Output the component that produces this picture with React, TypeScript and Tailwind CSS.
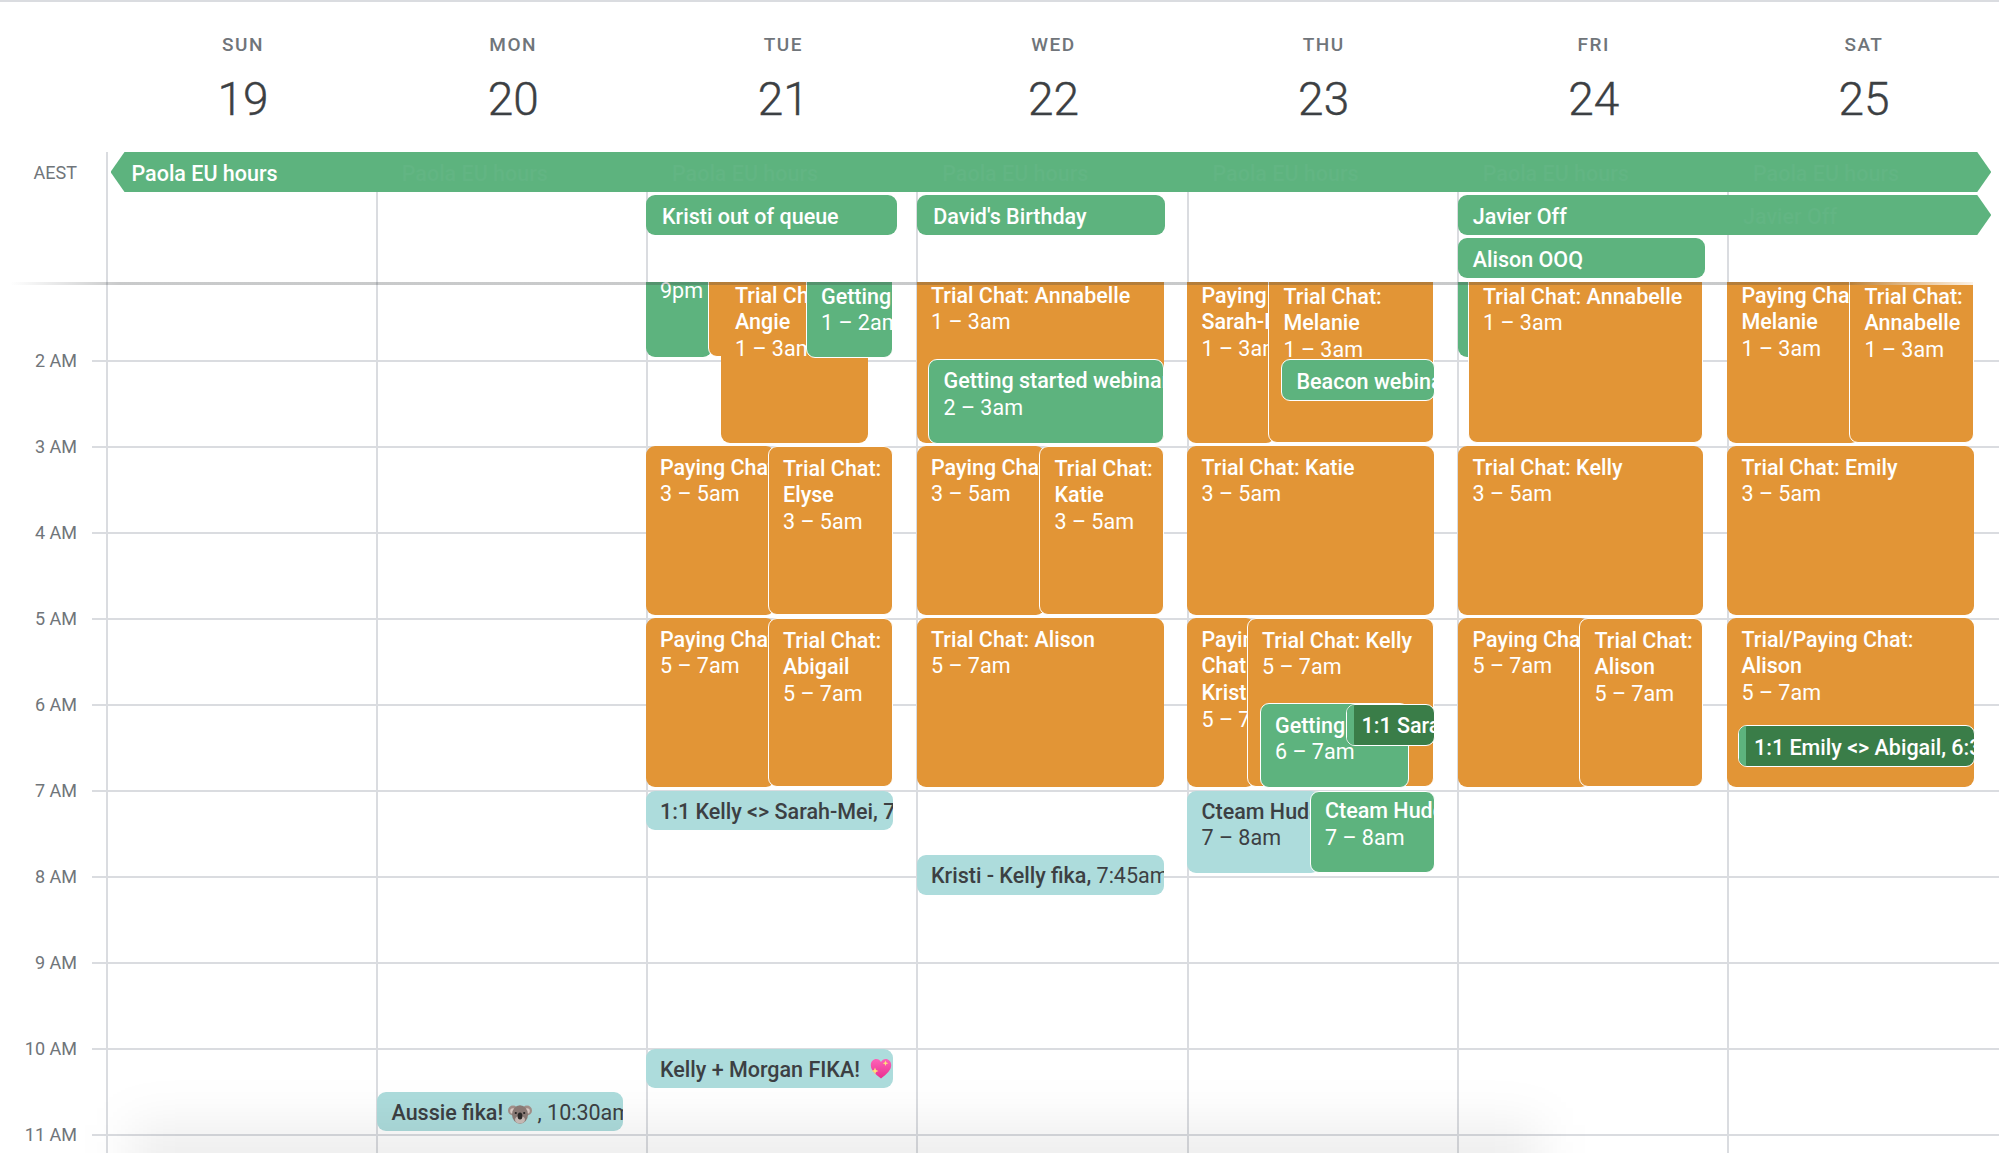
import type { ReactNode } from 'react';

const GREEN = 'bg-[#5db37e] text-white';
const ORANGE = 'bg-[#e29536] text-white';
const TEAL = 'bg-[#addcdc] text-[#3c4043]';
const DARK = 'bg-[#3a7d48] text-white';

const DAY_WIDTH = 270.25;
const GRID_LEFT = 107.5;
const GRID_TOP = 282;

type Item = {
  x1: number;
  x2: number;
  y1: number;
  y2: number;
  color: string;
  title: ReactNode[];
  time?: string;
  pt?: number;
  outline?: boolean;
  stripe?: boolean;
};

const orange = (x1: number, x2: number, y1: number, y2: number, title: string[], time: string, outline = false): Item => ({
  x1,
  x2,
  y1,
  y2,
  color: ORANGE,
  title,
  time,
  outline,
});

const SparkleHeart = () => (
  <svg viewBox="0 0 22 21" className="-my-[4px] ml-[10px] inline-block h-[21px] w-[22px] -translate-y-[2px] align-middle">
    <defs>
      <linearGradient id="heart" x1="0" y1="0" x2="0" y2="1">
        <stop offset="0" stopColor="#fd63b8" />
        <stop offset="1" stopColor="#ea2f8f" />
      </linearGradient>
    </defs>
    <path d="M11 20.5C5 16 .8 12.2.8 7 .8 3.4 3.4 1 6.300 1 8.300 1 10 2.100 11 4c1-1.900 2.700-3 4.700-3 2.900 0 5.500 2.400 5.500 6 0 5.200-4.200 9-10.200 13.500z" fill="url(#heart)" />
    <path d="M15.500 2.500l.8 2 2 .8-2 .8-.8 2-.8-2-2-.8 2-.8zM5 9.500l1 2.500 2.500 1-2.500 1-1 2.500-1-2.500-2.500-1 2.500-1z" fill="#ffe27a" />
  </svg>
);

const Koala = () => (
  <svg viewBox="0 0 24 20" className="-my-[4px] ml-[5px] inline-block h-[20px] w-[24px] align-middle">
    <circle cx="5" cy="6.500" r="5" fill="#a3918b" />
    <circle cx="19" cy="6.500" r="5" fill="#a3918b" />
    <circle cx="5" cy="7" r="2.800" fill="#dcccc6" />
    <circle cx="19" cy="7" r="2.800" fill="#dcccc6" />
    <ellipse cx="12" cy="10.500" rx="8" ry="9.200" fill="#8c7c77" />
    <ellipse cx="12" cy="15.800" rx="5" ry="3.800" fill="#cbbdb8" />
    <ellipse cx="12" cy="12" rx="2.400" ry="3.600" fill="#2d2a29" />
    <circle cx="7.800" cy="9" r="1.100" fill="#252322" />
    <circle cx="16.200" cy="9" r="1.100" fill="#252322" />
  </svg>
);

const days: Item[][] = [
  [],
  [
    {
      x1: 377,
      x2: 622.5,
      y1: 1092,
      y2: 1131,
      color: TEAL,
      pt: 7.5,
      title: [
        <>
          Aussie fika!
          <Koala /> <span className="font-normal">, 10:30am</span>
        </>,
      ],
    },
  ],
  [
    { x1: 645.5, x2: 712, y1: 270, y2: 357, color: GREEN, title: [<span className="font-normal">9pm</span>], pt: 7.5 },
    orange(708, 740, 270, 357, [], '', true),
    orange(720.5, 868, 270, 443, ['Trial Chat:', 'Angie'], '1 – 3am'),
    { x1: 805.5, x2: 893, y1: 270, y2: 357.5, color: GREEN, title: ['Getting started'], time: '1 – 2am', outline: true },
    orange(645.5, 775, 446, 615, ['Paying Chat: Kelly'], '3 – 5am'),
    orange(767.5, 893, 446, 615, ['Trial Chat:', 'Elyse'], '3 – 5am', true),
    orange(645.5, 775, 618, 787, ['Paying Chat: Kristi'], '5 – 7am'),
    orange(767.5, 893, 618, 787, ['Trial Chat:', 'Abigail'], '5 – 7am', true),
    { x1: 645.5, x2: 893, y1: 791, y2: 830, color: TEAL, pt: 7.5, title: ['1:1 Kelly <> Sarah-Mei, 7:00am'] },
    {
      x1: 645.5,
      x2: 893,
      y1: 1049,
      y2: 1088,
      color: TEAL,
      pt: 7.5,
      title: [
        <>
          Kelly + Morgan FIKA!
          <SparkleHeart />
        </>,
      ],
    },
  ],
  [
    orange(916.5, 1163.5, 270, 443, ['Trial Chat: Annabelle'], '1 – 3am'),
    { x1: 928, x2: 1164, y1: 358.500, y2: 443.500, color: GREEN, title: ['Getting started webinar'], time: '2 – 3am', outline: true },
    orange(916.5, 1045, 446, 615, ['Paying Chat: Alison'], '3 – 5am'),
    orange(1039, 1163.5, 446, 615, ['Trial Chat:', 'Katie'], '3 – 5am', true),
    orange(916.5, 1163.5, 618, 787, ['Trial Chat: Alison'], '5 – 7am'),
    {
      x1: 916.5,
      x2: 1163.5,
      y1: 855,
      y2: 895,
      color: TEAL,
      pt: 7.5,
      title: [
        <>
          Kristi - Kelly fika, <span className="font-normal">7:45am</span>
        </>,
      ],
    },
  ],
  [
    orange(1187, 1275, 270, 443, ['Paying Chat:', 'Sarah-Mei'], '1 – 3am'),
    orange(1268, 1434, 270, 443, ['Trial Chat:', 'Melanie'], '1 – 3am', true),
    { x1: 1281, x2: 1434.5, y1: 359, y2: 401, color: GREEN, title: ['Beacon webinar'], outline: true },
    orange(1187, 1434, 446, 615, ['Trial Chat: Katie'], '3 – 5am'),
    orange(1187, 1255, 618, 787, ['Paying', 'Chat:', 'Kristi'], '5 – 7am'),
    orange(1246.5, 1434, 618, 787, ['Trial Chat: Kelly'], '5 – 7am', true),
    { x1: 1259.5, x2: 1408.5, y1: 703, y2: 787.500, color: GREEN, title: ['Getting started'], time: '6 – 7am', outline: true },
    { x1: 1345.5, x2: 1434.5, y1: 703.500, y2: 745.500, color: DARK, title: ['1:1 Sarah-Mei'], outline: true, stripe: true },
    { x1: 1187, x2: 1320, y1: 791, y2: 873, color: TEAL, title: ['Cteam Huddle'], time: '7 – 8am', pt: 7.5 },
    { x1: 1309.5, x2: 1434.5, y1: 790.500, y2: 873, color: GREEN, title: ['Cteam Huddle'], time: '7 – 8am', outline: true, pt: 6.5 },
  ],
  [
    { x1: 1458, x2: 1480, y1: 270, y2: 357, color: GREEN, title: [] },
    orange(1467.5, 1703, 270, 443, ['Trial Chat: Annabelle'], '1 – 3am', true),
    orange(1458, 1703, 446, 615, ['Trial Chat: Kelly'], '3 – 5am'),
    orange(1458, 1590, 618, 787, ['Paying Chat: Emily'], '5 – 7am'),
    orange(1579, 1703, 618, 787, ['Trial Chat:', 'Alison'], '5 – 7am', true),
  ],
  [
    orange(1727, 1860, 270, 443, ['Paying Chat:', 'Melanie'], '1 – 3am'),
    orange(1849, 1974, 270, 443, ['Trial Chat:', 'Annabelle'], '1 – 3am', true),
    orange(1727, 1974, 446, 615, ['Trial Chat: Emily'], '3 – 5am'),
    orange(1727, 1974, 618, 787, ['Trial/Paying Chat:', 'Alison'], '5 – 7am'),
    { x1: 1738, x2: 1974.5, y1: 725, y2: 767, color: DARK, title: ['1:1 Emily <> Abigail, 6:30am'], outline: true, stripe: true },
  ],
];

const header = [
  ['SUN', '19'],
  ['MON', '20'],
  ['TUE', '21'],
  ['WED', '22'],
  ['THU', '23'],
  ['FRI', '24'],
  ['SAT', '25'],
];

const hours = ['2 AM', '3 AM', '4 AM', '5 AM', '6 AM', '7 AM', '8 AM', '9 AM', '10 AM', '11 AM'];

function CalendarEvent({ item, day }: { item: Item; day: number }) {
  const dayLeft = GRID_LEFT + DAY_WIDTH * day;
  const cut = item.y1 < GRID_TOP;
  const paddingTop = item.pt ?? (cut ? 12.5 : 8.5);

  return (
    <div
      className={`absolute flex overflow-hidden rounded-[9px] text-[21.5px] leading-[26.8px] ${item.color} ${
        item.outline ? 'border-[1.5px] border-white' : ''
      }`}
      style={{
        left: item.x1 - dayLeft,
        width: item.x2 - item.x1,
        top: item.y1 - GRID_TOP,
        height: item.y2 - item.y1,
      }}
    >
      {item.stripe && <div className="w-[7px] shrink-0 bg-[#5db37e]" />}
      <div className={`min-w-0 flex-1 whitespace-nowrap ${item.stripe ? 'pl-[8px]' : 'pl-[14.5px]'}`} style={{ paddingTop }}>
        {item.title.map((line, i) => (
          <div key={i} className="font-medium">
            {line}
          </div>
        ))}
        {item.time && <div>{item.time}</div>}
      </div>
    </div>
  );
}

export default function App() {
  return (
    <div className="relative h-[1153px] w-[1999px] overflow-hidden border-t-2 border-[#dadce0] bg-white font-[Roboto,sans-serif]">
      <div className="flex pt-[31px] pl-[108px]">
        {header.map(([name, date]) => (
          <div key={name} className="flex h-[119px] w-[270.25px] flex-col items-center">
            <div className="text-[19px] leading-[24px] font-medium tracking-[1.5px] text-[#70757a]">{name}</div>
            <div className="mt-[14px] text-[46px] leading-[56px] font-light text-[#3c4043] [-webkit-text-stroke:0.4px_#3c4043]">{date}</div>
          </div>
        ))}
      </div>

      <div className="flex h-[130px]">
        <div className="w-[105.5px] shrink-0 pt-[10px]">
          <div className="w-[77px] text-right text-[18px] leading-[22px] text-[#70757a]">AEST</div>
        </div>
        <div className="grid grid-cols-[repeat(7,270.25px)] grid-rows-[repeat(3,40px)] gap-y-[3px] text-[21.5px] leading-[27px] font-medium text-white">
          {header.map(([name], i) => (
            <div
              key={name}
              className={`row-span-4 row-start-1 h-[130px] border-l-2 border-[#dadce0] ${
                ['col-start-1', 'col-start-2', 'col-start-3', 'col-start-4', 'col-start-5', 'col-start-6', 'col-start-7'][i]
              }`}
            />
          ))}
          <div className="col-span-7 col-start-1 row-start-1 mr-[6px] ml-[5px] grid grid-cols-[repeat(7,270.25px)] items-center bg-[#5db37e] pt-[2px] pl-[21px] [clip-path:polygon(14px_0,calc(100%-14px)_0,100%_50%,calc(100%-14px)_100%,14px_100%,0_50%)]">
            <span>Paola EU hours</span>
            {[1, 2, 3, 4, 5, 6].map((n) => (
              <span key={n} className="text-[#62b583]">
                Paola EU hours
              </span>
            ))}
          </div>
          <div className="col-start-3 row-start-2 mr-[19px] flex items-center rounded-[9px] bg-[#5db37e] pt-[2px] pl-[16px]">Kristi out of queue</div>
          <div className="col-start-4 row-start-2 mr-[22px] ml-[1px] flex items-center rounded-[9px] bg-[#5db37e] pt-[2px] pl-[16px]">David's Birthday</div>
          <div className="col-span-2 col-start-6 row-start-2 mr-[6px] ml-[1px] grid grid-cols-[270.25px_1fr] items-center rounded-l-[9px] bg-[#5db37e] pt-[2px] pl-[15px] [clip-path:polygon(0_0,calc(100%-14px)_0,100%_50%,calc(100%-14px)_100%,0_100%)]">
            <span>Javier Off</span>
            <span className="text-[#62b583]">Javier Off</span>
          </div>
          <div className="col-start-6 row-start-3 mr-[22px] ml-[1px] flex items-center rounded-[9px] bg-[#5db37e] pt-[2px] pl-[15px]">Alison OOQ</div>
        </div>
      </div>

      <div className="relative h-[871px] overflow-hidden">
        <div className="h-[78px]" />
        {hours.map((hour) => (
          <div key={hour} className="flex h-[86px]">
            <div className="w-[77px] -translate-y-[10px] text-right text-[18px] leading-[22px] text-[#70757a]">{hour}</div>
            <div className="ml-[15px] flex-1 border-t-2 border-[#dadce0]" />
          </div>
        ))}

        <div className="absolute top-0 bottom-0 left-[105.5px] grid grid-cols-[repeat(7,270.25px)]">
          {days.map((items, day) => (
            <div key={day} className="relative border-l-2 border-[#dadce0]">
              {items.map((item, i) => (
                <CalendarEvent key={i} item={item} day={day} />
              ))}
            </div>
          ))}
        </div>

        <div className="absolute top-0 left-0 h-[3px] w-full bg-[linear-gradient(90deg,rgba(60,64,67,0)_0.5%,rgba(60,64,67,0.28)_6%,rgba(60,64,67,0.28)_92%,rgba(60,64,67,0)_99%)]" />
        <div className="absolute top-0 right-0 h-[3px] w-[150px] bg-[linear-gradient(90deg,rgba(255,255,255,0),rgba(255,255,255,0.9)_85%)]" />
        <div className="absolute top-[843px] left-[130px] h-[75px] w-[1410px] bg-black/[0.07] blur-[25px]" />
      </div>
    </div>
  );
}
